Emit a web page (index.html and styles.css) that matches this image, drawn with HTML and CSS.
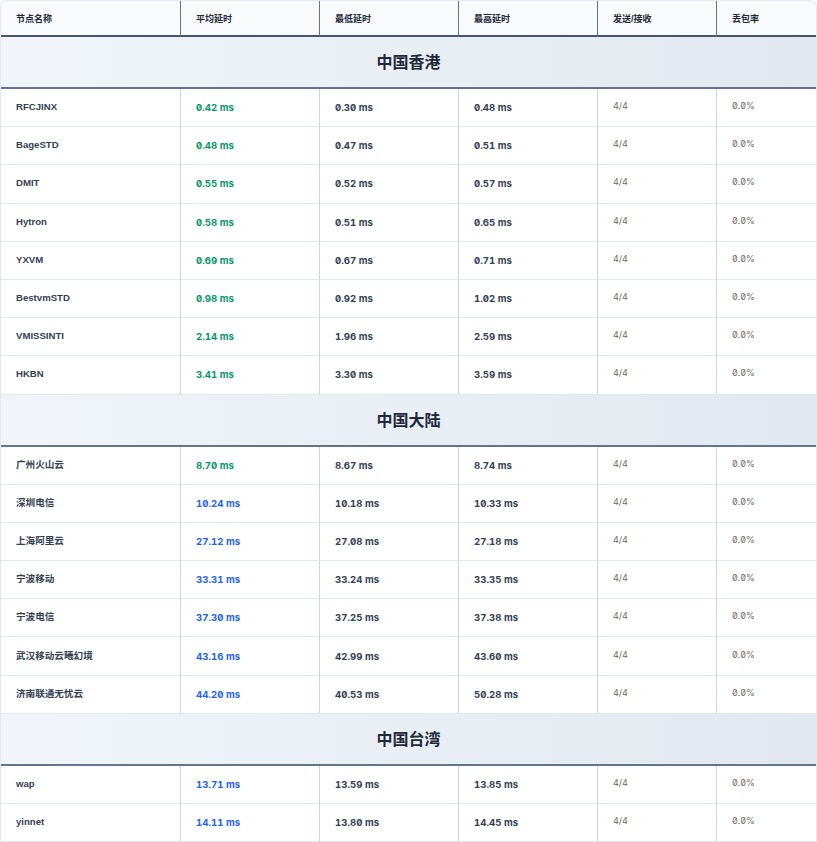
FILE: index.html
```html
<!DOCTYPE html>
<html lang="zh-CN">
<head>
<meta charset="utf-8">
<title>延迟测试</title>
<link rel="stylesheet" href="styles.css">
</head>
<body>
<table class="tbl">
  <colgroup>
    <col class="c1"><col class="c2"><col class="c3"><col class="c4"><col class="c5"><col class="c6">
  </colgroup>
  <thead>
    <tr>
      <th>节点名称</th><th>平均延时</th><th>最低延时</th><th>最高延时</th><th>发送/接收</th><th>丢包率</th>
    </tr>
  </thead>
  <tbody>
    <tr class="group"><td colspan="6">中国香港</td></tr>
    <tr><td class="name">RFCJINX</td><td class="avg green">0.42 ms</td><td class="num">0.30 ms</td><td class="num">0.48 ms</td><td class="sr">4/4</td><td class="sr">0.0%</td></tr>
    <tr><td class="name">BageSTD</td><td class="avg green">0.48 ms</td><td class="num">0.47 ms</td><td class="num">0.51 ms</td><td class="sr">4/4</td><td class="sr">0.0%</td></tr>
    <tr><td class="name">DMIT</td><td class="avg green">0.55 ms</td><td class="num">0.52 ms</td><td class="num">0.57 ms</td><td class="sr">4/4</td><td class="sr">0.0%</td></tr>
    <tr><td class="name">Hytron</td><td class="avg green">0.58 ms</td><td class="num">0.51 ms</td><td class="num">0.65 ms</td><td class="sr">4/4</td><td class="sr">0.0%</td></tr>
    <tr><td class="name">YXVM</td><td class="avg green">0.69 ms</td><td class="num">0.67 ms</td><td class="num">0.71 ms</td><td class="sr">4/4</td><td class="sr">0.0%</td></tr>
    <tr><td class="name">BestvmSTD</td><td class="avg green">0.98 ms</td><td class="num">0.92 ms</td><td class="num">1.02 ms</td><td class="sr">4/4</td><td class="sr">0.0%</td></tr>
    <tr><td class="name">VMISSINTI</td><td class="avg green">2.14 ms</td><td class="num">1.96 ms</td><td class="num">2.59 ms</td><td class="sr">4/4</td><td class="sr">0.0%</td></tr>
    <tr><td class="name">HKBN</td><td class="avg green">3.41 ms</td><td class="num">3.30 ms</td><td class="num">3.59 ms</td><td class="sr">4/4</td><td class="sr">0.0%</td></tr>
    <tr class="group"><td colspan="6">中国大陆</td></tr>
    <tr><td class="name">广州火山云</td><td class="avg green">8.70 ms</td><td class="num">8.67 ms</td><td class="num">8.74 ms</td><td class="sr">4/4</td><td class="sr">0.0%</td></tr>
    <tr><td class="name">深圳电信</td><td class="avg blue">10.24 ms</td><td class="num">10.18 ms</td><td class="num">10.33 ms</td><td class="sr">4/4</td><td class="sr">0.0%</td></tr>
    <tr><td class="name">上海阿里云</td><td class="avg blue">27.12 ms</td><td class="num">27.08 ms</td><td class="num">27.18 ms</td><td class="sr">4/4</td><td class="sr">0.0%</td></tr>
    <tr><td class="name">宁波移动</td><td class="avg blue">33.31 ms</td><td class="num">33.24 ms</td><td class="num">33.35 ms</td><td class="sr">4/4</td><td class="sr">0.0%</td></tr>
    <tr><td class="name">宁波电信</td><td class="avg blue">37.30 ms</td><td class="num">37.25 ms</td><td class="num">37.38 ms</td><td class="sr">4/4</td><td class="sr">0.0%</td></tr>
    <tr><td class="name">武汉移动云曦幻境</td><td class="avg blue">43.16 ms</td><td class="num">42.99 ms</td><td class="num">43.60 ms</td><td class="sr">4/4</td><td class="sr">0.0%</td></tr>
    <tr><td class="name">济南联通无忧云</td><td class="avg blue">44.20 ms</td><td class="num">40.53 ms</td><td class="num">50.28 ms</td><td class="sr">4/4</td><td class="sr">0.0%</td></tr>
    <tr class="group"><td colspan="6">中国台湾</td></tr>
    <tr><td class="name">wap</td><td class="avg blue">13.71 ms</td><td class="num">13.59 ms</td><td class="num">13.85 ms</td><td class="sr">4/4</td><td class="sr">0.0%</td></tr>
    <tr><td class="name">yinnet</td><td class="avg blue">14.11 ms</td><td class="num">13.80 ms</td><td class="num">14.45 ms</td><td class="sr">4/4</td><td class="sr">0.0%</td></tr>
  </tbody>
</table>
</body>
</html>
```

FILE: styles.css
```css
html, body {
  margin: 0;
  padding: 0;
  background: #ffffff;
}

body {
  font-family: "Liberation Sans", "Noto Sans CJK SC", sans-serif;
  color: #1e293b;
}

.tbl {
  width: 817px;
  border-collapse: separate;
  border-spacing: 0;
  table-layout: fixed;
  border: 1px solid #e2e8f0;
  border-bottom: none;
  border-radius: 8px 8px 0 0;
  overflow: hidden;
}

.c1 { width: 180px; }
.c2 { width: 139px; }
.c3 { width: 139px; }
.c4 { width: 139px; }
.c5 { width: 119px; }
.c6 { width: auto; }

thead th {
  box-sizing: border-box;
  background: #f8fafc;
  height: 36px;
  padding: 0 0 0 15px;
  text-align: left;
  font-size: 9px;
  font-weight: 700;
  color: #1e293b;
  border-right: 1px solid #64748b;
  border-bottom: 2px solid #475569;
}

thead th:last-child { border-right: none; }

tbody td {
  box-sizing: border-box;
  height: 38.2px;
  padding: 0 0 0 15px;
  border-right: 1px solid #cbd5e1;
  border-bottom: 1px solid #e2e8f0;
  font-size: 9.6px;
  line-height: 14px;
  vertical-align: middle;
}

tbody td:last-child { border-right: none; }

.group td {
  height: 52px;
  padding: 0 0 2px;
  text-align: center;
  font-size: 16px;
  line-height: 20px;
  font-weight: 700;
  color: #1e293b;
  font-family: "Noto Sans CJK SC", sans-serif;
  background: linear-gradient(90deg, #f1f5f9 0%, #e2e8f0 100%);
  border-right: none;
  border-bottom: 2px solid #64748b;
}

.name {
  font-weight: 700;
  color: #334155;
  padding-bottom: 1px;
}

.avg, .num {
  font-family: "Inter", "Liberation Sans", sans-serif;
  font-feature-settings: "zero" 1, "tnum" 1;
  font-weight: 700;
  font-size: 9.6px;
  padding-top: 1px;
}

.num { color: #334155; }
.green { color: #059669; }
.blue { color: #2563eb; }

.sr {
  font-family: "Inter", "Liberation Sans", sans-serif;
  font-feature-settings: "zero" 1, "tnum" 1;
  font-size: 9px;
  color: #6f6763;
  padding-bottom: 3px;
}
```
